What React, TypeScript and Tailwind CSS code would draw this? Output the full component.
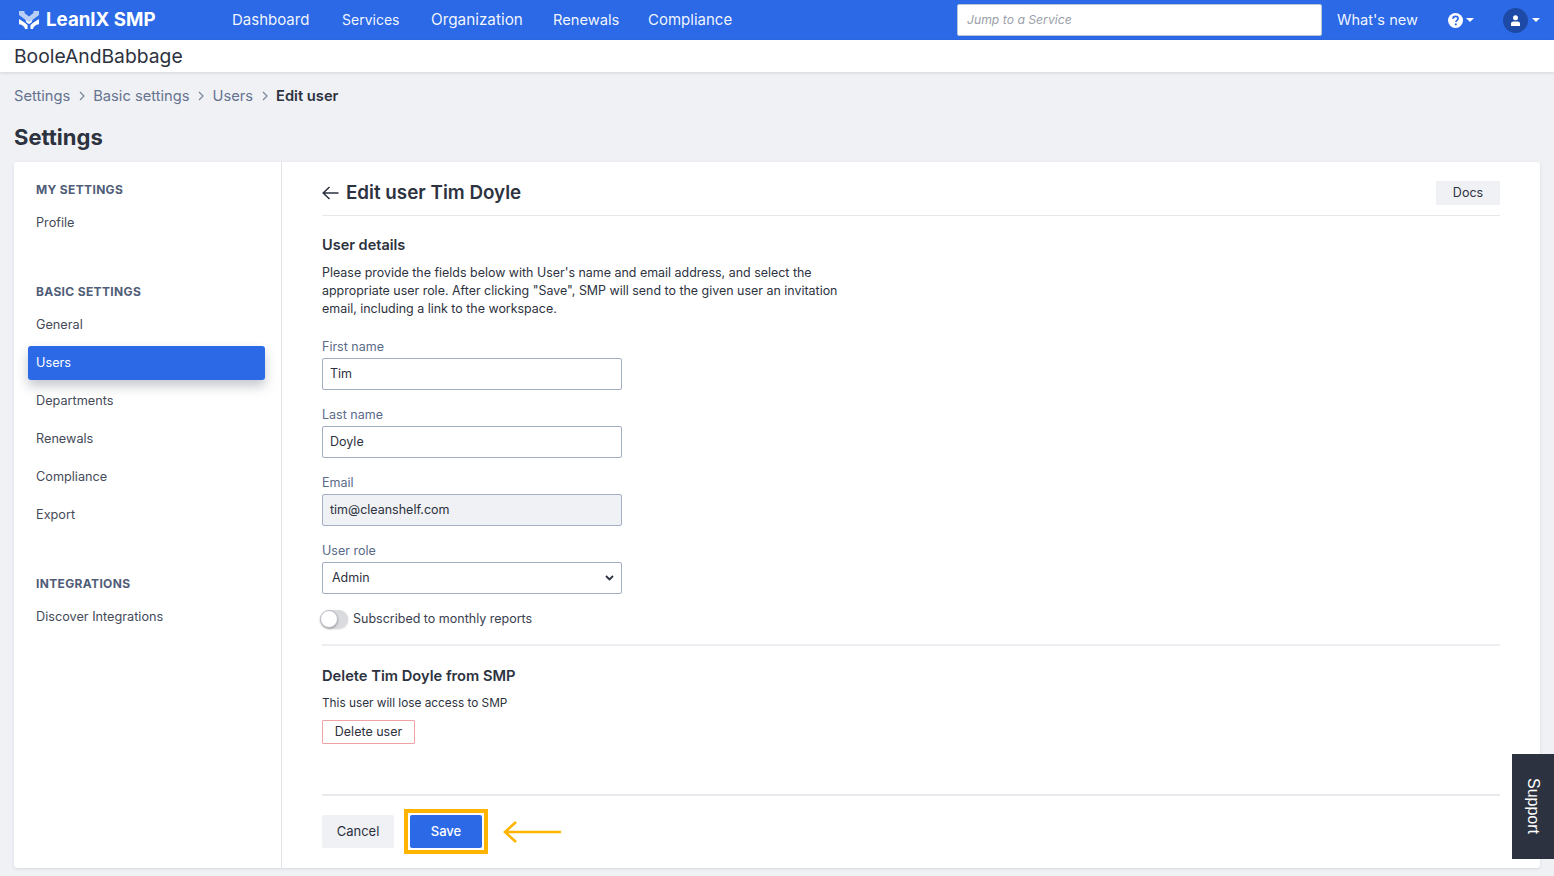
import React from "react";

function NavLink({ children, className }: { children: React.ReactNode; className?: string }) {
  return <span className={"leading-none text-white/95 " + (className ?? "text-[15px]")}>{children}</span>;
}

function SideHead({ children, className }: { children: React.ReactNode; className?: string }) {
  return <div className={"px-[22px] text-[12px] leading-[16px] font-bold tracking-[0.35px] text-[#505d78] " + (className ?? "")}>{children}</div>;
}

function SideItem({ children, active }: { children: React.ReactNode; active?: boolean }) {
  return (
    <div
      className={
        "ml-[14px] mr-[16px] flex h-[34px] items-center rounded-[3px] px-2 text-[12.7px] " +
        (active ? "bg-[#2b69e6] text-white shadow-[0_6px_12px_rgba(60,70,90,0.3)]" : "text-[#454b59]")
      }
    >
      {children}
    </div>
  );
}

function Field({ label, value, disabled }: { label: string; value: string; disabled?: boolean }) {
  return (
    <div className="flex flex-col">
      <div className="mb-[3px] text-[12.5px] leading-[16px] text-[#5a6a8a]">{label}</div>
      <div
        className={
          "flex h-[32px] w-[300px] items-center rounded-[2px] border border-[#a3afc4] px-[7px] text-[12.5px] text-[#2d3240] " +
          (disabled ? "bg-[#f0f1f4]" : "bg-white")
        }
      >
        {value}
      </div>
    </div>
  );
}

function Chevron() {
  return (
    <svg width="8" height="10" viewBox="0 0 8 10" fill="none" stroke="#7a8597" strokeWidth="1.2">
      <path d="M2 1l4 4-4 4" />
    </svg>
  );
}

export default function App() {
  return (
    <div
      className="relative flex h-[876px] w-[1554px] flex-col overflow-hidden bg-[#f0f1f5] text-[#2d3240]"
      style={{ fontFamily: "Inter, 'Liberation Sans', sans-serif" }}
    >
      <header className="flex h-10 shrink-0 items-center bg-[#2b69e6]">
        <div className="flex w-[232px] shrink-0 items-center pl-[19px]">
          <svg width="20" height="18" viewBox="0 0 20 18">
            <path d="M0 0h5.500v2L10 5.500 14.500 2V0H20v4l-6 4.500-4 3-4-3L0 4z" fill="#b9cff5" />
            <path d="M0 8l5.500 3.500L8.500 14v4H6c-.3-2.500-2.500-4.300-6-4.800zM20 8l-5.500 3.500-3 2.500v4H14c.3-2.500 2.500-4.300 6-4.800zM6.500 8.500L10 11l3.500-2.500-1 3L10 13l-2.500-1.500z" fill="#fff" />
          </svg>
          <span className="ml-[7px] text-[18.7px] font-bold leading-none text-white">LeanIX SMP</span>
        </div>
        <nav className="flex items-center">
          <NavLink className="w-[110px] text-[15px]">Dashboard</NavLink>
          <NavLink className="w-[89px] text-[14px]">Services</NavLink>
          <NavLink className="w-[122px] text-[15.3px]">Organization</NavLink>
          <NavLink className="w-[95px] text-[14.7px]">Renewals</NavLink>
          <NavLink className="text-[15px]">Compliance</NavLink>
        </nav>
        <div className="ml-auto flex items-center">
          <div className="flex h-[32px] w-[365px] items-center rounded-[2px] border border-[#b9c4d6] bg-white px-[9px] text-[12.2px] italic text-[#9aa0aa]">
            Jump to a Service
          </div>
          <NavLink className="ml-[15px] text-[14.6px]">What's new</NavLink>
          <div className="ml-[30px] flex items-center">
            <svg width="15" height="15" viewBox="0 0 15 15">
              <circle cx="7.500" cy="7.500" r="7.500" fill="#fff" />
              <path d="M5 5.800c0-1.500 1.100-2.400 2.600-2.400s2.500.9 2.500 2.100c0 1.800-2.200 1.800-2.200 3.500" fill="none" stroke="#2b69e6" strokeWidth="1.700" />
              <circle cx="7.800" cy="11.400" r="1.100" fill="#2b69e6" />
            </svg>
            <span className="ml-[3px] h-0 w-0 border-x-[4px] border-t-[4px] border-x-transparent border-t-white" />
          </div>
          <div className="ml-[29px] mr-[14px] flex items-center">
            <div className="flex h-[25px] w-[25px] items-center justify-center rounded-full bg-[#1d4aa6]">
              <svg width="11" height="11" viewBox="0 0 11 11" fill="#fff">
                <circle cx="5.500" cy="2.800" r="2.500" />
                <path d="M1 11V8.600C1 7.200 2.200 6.400 3.500 6.400h4C8.800 6.400 10 7.200 10 8.600V11z" />
              </svg>
            </div>
            <span className="ml-[4px] h-0 w-0 border-x-[4px] border-t-[4px] border-x-transparent border-t-white" />
          </div>
        </div>
      </header>

      <div className="z-10 flex h-8 shrink-0 items-center bg-white px-[14px] text-[19.3px] text-[#2d3240] shadow-[0_1px_3px_rgba(40,50,70,0.15)]">
        BooleAndBabbage
      </div>

      <div className="mt-[15px] flex h-[18px] shrink-0 items-center gap-[7.500px] px-[14px] text-[14.7px] text-[#66738f]">
        <span>Settings</span>
        <Chevron />
        <span>Basic settings</span>
        <Chevron />
        <span>Users</span>
        <Chevron />
        <span className="font-semibold text-[#2d3240]">Edit user</span>
      </div>

      <h1 className="mt-[19px] h-[26px] shrink-0 px-[14px] text-[22px] font-bold leading-[26px] text-[#2d3240]">Settings</h1>

      <main className="mx-[14px] mt-[12px] flex h-[706px] shrink-0 rounded-[3px] bg-white shadow-[0_1px_3px_rgba(40,50,70,0.12)]">
        <aside className="flex w-[268px] shrink-0 flex-col border-r border-[#e2e4ea] pt-[20px]">
          <SideHead>MY SETTINGS</SideHead>
          <div className="mt-[8px]"><SideItem>Profile</SideItem></div>
          <SideHead className="mt-[44px]">BASIC SETTINGS</SideHead>
          <div className="mt-[8px] flex flex-col gap-[4px]">
            <SideItem>General</SideItem>
            <SideItem active>Users</SideItem>
            <SideItem>Departments</SideItem>
            <SideItem>Renewals</SideItem>
            <SideItem>Compliance</SideItem>
            <SideItem>Export</SideItem>
          </div>
          <SideHead className="mt-[44px]">INTEGRATIONS</SideHead>
          <div className="mt-[8px]"><SideItem>Discover Integrations</SideItem></div>
        </aside>

        <section className="flex min-w-0 flex-1 flex-col px-[40px]">
          <div className="flex h-[54px] shrink-0 items-center justify-between border-b border-[#e6e8ec] pt-[9px]">
            <div className="flex items-center">
              <svg width="17" height="14" viewBox="0 0 17 14" fill="none" stroke="#2d3240" strokeWidth="1.500">
                <path d="M16.500 7H1.200M7.500 1L1.200 7l6.300 6" />
              </svg>
              <span className="ml-[7px] text-[18.8px] font-semibold leading-none">Edit user Tim Doyle</span>
            </div>
            <div className="flex h-[24px] w-[64px] items-center justify-center bg-[#f0f1f5] text-[12.5px]">Docs</div>
          </div>

          <h2 className="mt-[20px] text-[14.5px] font-semibold leading-[18px]">User details</h2>
          <p className="mt-[10px] w-[530px] text-[12.45px] leading-[18px] text-[#2d3240]">
            Please provide the fields below with User's name and email address, and select the appropriate user role. After clicking "Save", SMP will send to the given user an invitation email, including a link to the workspace.
          </p>

          <div className="mt-[21px] flex flex-col gap-[17px]">
            <Field label="First name" value="Tim" />
            <Field label="Last name" value="Doyle" />
            <Field label="Email" value="tim@cleanshelf.com" disabled />
            <div className="flex flex-col">
              <div className="mb-[3px] text-[12.5px] leading-[16px] text-[#5a6a8a]">User role</div>
              <div className="flex h-[32px] w-[300px] items-center justify-between rounded-[2px] border border-[#a3afc4] bg-white pl-[9px] pr-[7px] text-[12.5px]">
                <span>Admin</span>
                <svg width="9" height="6" viewBox="0 0 9 6" fill="none" stroke="#2d3240" strokeWidth="1.800">
                  <path d="M1 1l3.500 3.500L8 1" />
                </svg>
              </div>
            </div>
          </div>

          <div className="mt-[15px] flex h-[20px] items-center">
            <div className="relative h-[18px] w-[26px] rounded-full bg-[#d9dbdf] shadow-[0_1px_2px_rgba(0,0,0,0.2)]">
              <div className="absolute -left-[2px] top-0 h-[18px] w-[18px] rounded-full border border-[#b8bcc4] bg-white shadow-[0_1px_2px_rgba(0,0,0,0.3)]" />
            </div>
            <span className="ml-[5px] text-[12.5px] text-[#3a4050]">Subscribed to monthly reports</span>
          </div>

          <div className="mt-[15px] h-[2px] shrink-0 bg-[#eceef1]" />
          <h2 className="mt-[21px] text-[14.7px] font-semibold leading-[18px]">Delete Tim Doyle from SMP</h2>
          <p className="mt-[9px] text-[11.8px] leading-[18px]">This user will lose access to SMP</p>
          <div className="mt-[8px] flex h-[24px] w-[93px] items-center justify-center rounded-[1px] border-[1.500px] border-[#f0a3a5] text-[12.5px]">Delete user</div>

          <div className="mt-[50px] h-[2px] shrink-0 bg-[#e8eaed]" />
          <div className="mt-[13px] flex items-center">
            <div className="flex h-[33px] w-[72px] items-center justify-center rounded-[2px] bg-[#f0f1f5] text-[13px]">Cancel</div>
            <div className="ml-[10px] flex h-[45px] w-[84px] items-center justify-center border-[4px] border-[#ffb400] bg-white">
              <div className="flex h-[33px] w-[72px] items-center justify-center rounded-[2px] bg-[#2b69e6] text-[13px] font-medium text-white">Save</div>
            </div>
            <svg className="ml-[15px]" width="58" height="24" viewBox="0 0 58 24" fill="none" stroke="#ffb400" strokeWidth="2.600">
              <path d="M58 12H2M13 2L2 12l11 10" />
            </svg>
          </div>
        </section>
      </main>

      <div className="absolute bottom-[17px] right-0 flex h-[105px] w-[42px] items-center justify-center bg-[#2d3240]">
        <span className="text-[16px] text-white [writing-mode:vertical-rl]" style={{ fontFamily: "'Liberation Sans', sans-serif" }}>Support</span>
      </div>
    </div>
  );
}
